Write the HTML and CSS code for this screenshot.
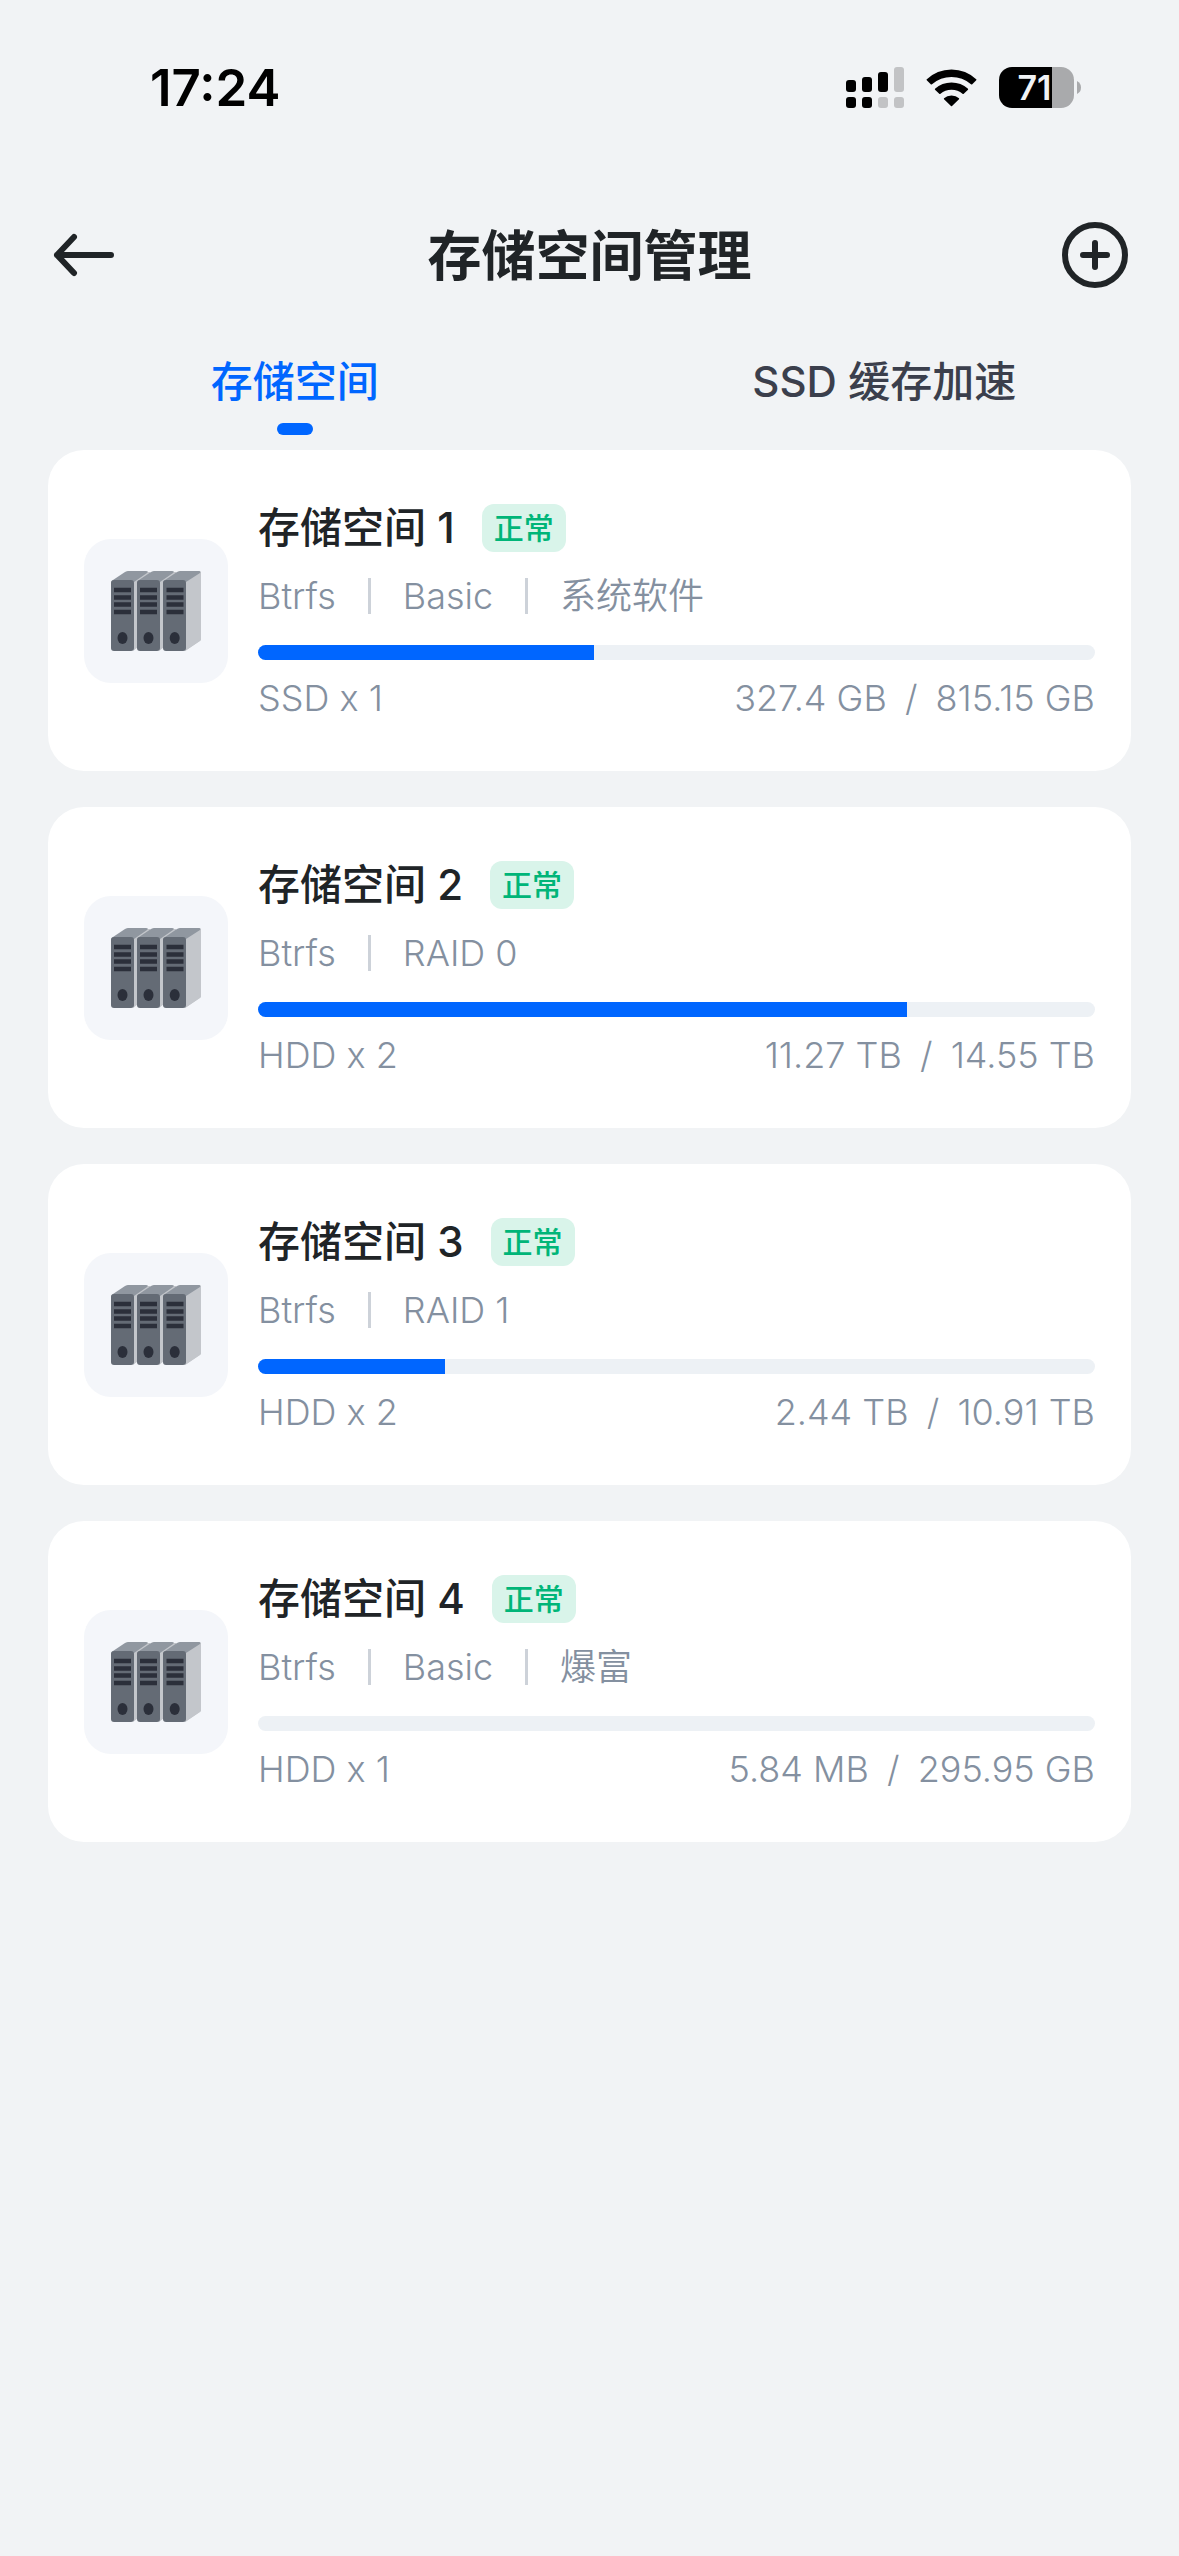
FILE: index.html
```html
<!DOCTYPE html>
<html lang="zh-CN">
<head>
  <meta charset="UTF-8">
  <meta name="viewport" content="width=device-width, initial-scale=1">
  <title>存储空间管理</title>
  <link rel="stylesheet" href="styles.css">
</head>
<body>
  <svg width="0" height="0" class="sprite" aria-hidden="true">
    <symbol id="server" viewBox="0 0 144 144">
      <path fill="#c3c6cb" d="M48 43L63 33H66V39L79 33H92V39L102 41L117 33V101L101 112L99 110L80 108L75 112L73 108L54 108L49 112Z"/>
      <path fill="#c3c6cb" d="M100 42L115 32Q117 32 117 34V100Q117 101 116 102L101 112Z"/>
      <path fill="#9097a0" d="M27 44Q27 42 29 41L41 33Q43 32 44 32H62Q65 32 63 34L50 43Z"/>
      <path fill="#9097a0" d="M53 44Q53 42 55 41L67 33Q69 32 70 32H88Q91 32 89 34L76 43Z"/>
      <path fill="#9097a0" d="M79 44Q79 42 81 41L93 33Q95 32 96 32H115Q117 32 116 34L102 43Z"/>
      <g fill="#646b75">
        <rect x="27" y="41" width="23" height="71" rx="3"/>
        <rect x="53" y="41" width="23" height="71" rx="3"/>
        <rect x="79" y="41" width="23" height="71" rx="3"/>
      </g>
      <path stroke="#2b2f3a" stroke-width="4.4" d="M30 51H47M30 58.5H47M30 65.5H47M30 73H47M56 51H73M56 58.5H73M56 65.5H73M56 73H73M82.500 51H99.500M82.500 58.5H99.500M82.500 65.5H99.500M82.500 73H99.500"/>
      <g fill="#2b2f3a">
        <ellipse cx="38.500" cy="99" rx="5" ry="6"/>
        <ellipse cx="64.500" cy="99" rx="5" ry="6"/>
        <ellipse cx="90.700" cy="99" rx="5" ry="6"/>
      </g>
    </symbol>
  </svg>

  <div class="statusbar">
    <span class="time">17:24</span>
    <div class="status-icons">
      <svg width="58" height="41" viewBox="0 0 58 41" aria-hidden="true">
        <rect x="0" y="13" width="10" height="12" rx="3"/>
        <rect x="16" y="10" width="10" height="15" rx="3"/>
        <rect x="32" y="5" width="10" height="20" rx="3"/>
        <rect x="48" y="0" width="10" height="25" rx="3" fill="#c2c3c5"/>
        <rect x="0" y="30" width="10" height="11" rx="3"/>
        <rect x="16" y="30" width="10" height="11" rx="3"/>
        <rect x="32" y="30" width="10" height="11" rx="3" fill="#c2c3c5"/>
        <rect x="48" y="30" width="10" height="11" rx="3" fill="#c2c3c5"/>
      </svg>
      <svg width="51" height="38" viewBox="0 0 51 38" aria-hidden="true">
        <path d="M0.500 10.500Q11 0.500 25.500 0.500T50.500 10.500Q50.500 11 50 11.500L46 15.500Q45.500 15.500 45 15.200Q36.500 8 25.500 8T6 15.200Q5.500 15.500 5 15.500L1 11.500Q0.500 11 0.500 10.500Z"/>
        <path d="M9 19.800Q16 13.500 25.500 13.500T42 19.800Q42.300 20.300 42 20.700L37.500 25Q37 25.200 36.500 24.800Q32 20.800 25.500 20.800T14.500 24.800Q14 25.200 13.500 25L9 20.700Q8.700 20.300 9 19.800Z"/>
        <path d="M18 29.300Q21 26.500 25.500 26.500T33 29.300Q33.300 29.700 33 30.200L26 37Q25.500 37.500 25 37L18 30.200Q17.700 29.700 18 29.300Z"/>
      </svg>
      <div class="battery">
        <span class="battery-level">71</span>
        <svg width="4" height="13" viewBox="0 0 4 13" aria-hidden="true"><path fill="#a9aaac" d="M0 0Q4 2 4 6.500T0 13Z"/></svg>
      </div>
    </div>
  </div>

  <header class="navbar">
    <button class="icon-btn" type="button" aria-label="返回">
      <svg width="66" height="66" viewBox="0 0 66 66" fill="none" stroke="#202427" stroke-width="6" stroke-linecap="round" stroke-linejoin="round">
        <path d="M60 33H6M23 15L6 33L23 51"/>
      </svg>
    </button>
    <h1>存储空间管理</h1>
    <button class="icon-btn" type="button" aria-label="添加">
      <svg width="66" height="66" viewBox="0 0 66 66" fill="none" stroke="#202427" stroke-width="6" stroke-linecap="round">
        <circle cx="33" cy="33" r="30"/>
        <path d="M33 21V45M21 33H45"/>
      </svg>
    </button>
  </header>

  <nav class="tabs">
    <a class="tab active" href="#storage">存储空间</a>
    <a class="tab" href="#cache">SSD 缓存加速</a>
  </nav>

  <main class="list" id="storage">
    <section class="card">
      <div class="thumb"><svg width="144" height="144" aria-hidden="true"><use href="#server"/></svg></div>
      <div class="info">
        <div class="name"><h2>存储空间 1</h2><span class="badge">正常</span></div>
        <div class="meta"><span>Btrfs</span><span>Basic</span><span>系统软件</span></div>
        <div class="bar"><div class="fill" style="width: 40.2%"></div></div>
        <div class="usage"><span>SSD x 1</span><span>327.4 GB <i>/</i> 815.15 GB</span></div>
      </div>
    </section>

    <section class="card">
      <div class="thumb"><svg width="144" height="144" aria-hidden="true"><use href="#server"/></svg></div>
      <div class="info">
        <div class="name"><h2>存储空间 2</h2><span class="badge">正常</span></div>
        <div class="meta"><span>Btrfs</span><span>RAID 0</span></div>
        <div class="bar"><div class="fill" style="width: 77.5%"></div></div>
        <div class="usage"><span>HDD x 2</span><span>11.27 TB <i>/</i> 14.55 TB</span></div>
      </div>
    </section>

    <section class="card">
      <div class="thumb"><svg width="144" height="144" aria-hidden="true"><use href="#server"/></svg></div>
      <div class="info">
        <div class="name"><h2>存储空间 3</h2><span class="badge">正常</span></div>
        <div class="meta"><span>Btrfs</span><span>RAID 1</span></div>
        <div class="bar"><div class="fill" style="width: 22.4%"></div></div>
        <div class="usage"><span>HDD x 2</span><span>2.44 TB <i>/</i> 10.91 TB</span></div>
      </div>
    </section>

    <section class="card">
      <div class="thumb"><svg width="144" height="144" aria-hidden="true"><use href="#server"/></svg></div>
      <div class="info">
        <div class="name"><h2>存储空间 4</h2><span class="badge">正常</span></div>
        <div class="meta"><span>Btrfs</span><span>Basic</span><span>爆富</span></div>
        <div class="bar"><div class="fill" style="width: 0%"></div></div>
        <div class="usage"><span>HDD x 1</span><span>5.84 MB <i>/</i> 295.95 GB</span></div>
      </div>
    </section>
  </main>
</body>
</html>
```
FILE: styles.css
```css
* { box-sizing: border-box; }
body {
  margin: 0;
  min-height: 100vh;
  background: #f1f3f5;
  color: #202427;
  font-family: Inter, "Noto Sans CJK SC", sans-serif;
}
h1, h2 { margin: 0; }
svg { display: block; }
.sprite { position: absolute; }

/* status bar */
.statusbar {
  display: flex;
  justify-content: space-between;
  align-items: center;
  height: 175px;
  padding: 0 98px 0 150px;
  color: #000;
}
.time { font-size: 51px; font-weight: 600; }
.status-icons { display: flex; align-items: center; gap: 22px; }
.battery { display: flex; align-items: center; gap: 3px; }
.battery-level {
  width: 75px;
  height: 41px;
  padding-right: 4px;
  border-radius: 13px;
  background: linear-gradient(to right, #000 53px, #a9aaac 53px);
  color: #f1f3f5;
  font-size: 34px;
  font-weight: 600;
  line-height: 41px;
  text-align: center;
}

/* title bar */
.navbar {
  display: flex;
  justify-content: space-between;
  align-items: center;
  height: 160px;
  padding: 0 51px;
}
.navbar h1 { padding-top: 4px; font-size: 54px; font-weight: 600; line-height: 78px; }
.icon-btn { padding: 0; border: none; background: none; cursor: pointer; }

/* tabs */
.tabs { display: flex; height: 115px; }
.tab {
  flex: 1;
  display: flex;
  flex-direction: column;
  align-items: center;
  padding-top: 17px;
  color: #3b3f4c;
  font-size: 42px;
  font-weight: 500;
  line-height: 60px;
  text-decoration: none;
}
.tab.active { color: #0066ff; }
.tab.active::after {
  content: "";
  width: 36px;
  height: 12px;
  margin-top: 11px;
  border-radius: 6px;
  background: #0066ff;
}

/* volumes */
.list { display: flex; flex-direction: column; gap: 36px; padding: 0 48px; }
.card {
  display: flex;
  align-items: center;
  gap: 30px;
  padding: 0 36px;
  border-radius: 36px;
  background: #fff;
}
.thumb { border-radius: 27px; background: #f4f6fa; }
.info { flex: 1; padding: 48px 0 46px; }
.name { display: flex; align-items: center; gap: 27px; height: 60px; }
.name h2 { font-size: 42px; font-weight: 500; line-height: 60px; }
.badge {
  padding: 0 12px;
  border-radius: 12px;
  background: #d9f4ea;
  color: #00b578;
  font-size: 30px;
  font-weight: 500;
  line-height: 48px;
}
.meta, .usage { color: #8490a0; font-size: 36px; font-weight: 350; line-height: 54px; }
.meta { display: flex; align-items: center; margin-top: 11px; }
.meta span + span { display: flex; align-items: center; }
.meta span + span::before {
  content: "";
  width: 3px;
  height: 36px;
  margin: 0 32px;
  background: #cdd2d9;
}
.bar { height: 15px; margin: 22px 0 11px; border-radius: 8px; background: #edf1f5; overflow: hidden; }
.fill { height: 100%; background: #0066ff; }
.usage { display: flex; justify-content: space-between; }
.usage i { margin: 0 8px; font-style: normal; }
```
